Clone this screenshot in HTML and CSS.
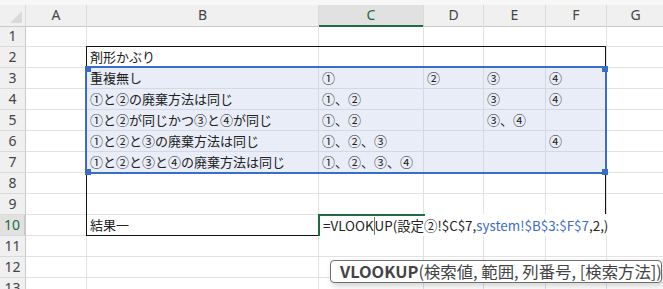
FILE: index.html
```html
<!DOCTYPE html>
<html lang="ja">
<head>
    <meta charset="UTF-8">
    <meta name="viewport" content="width=device-width, initial-scale=1.0">
    <title>system - Excel</title>
    <link rel="stylesheet" href="styles.css">
</head>
<body>
    <div class="strip"></div>
    <div class="sheet">
        <div class="row head">
            <div class="corner"></div>
            <div class="col">A</div>
            <div class="col">B</div>
            <div class="col active">C</div>
            <div class="col">D</div>
            <div class="col">E</div>
            <div class="col">F</div>
            <div class="col">G</div>
        </div>
        <div class="row">
            <div class="num">1</div>
            <div class="cell"></div><div class="cell"></div><div class="cell"></div><div class="cell"></div><div class="cell"></div><div class="cell"></div><div class="cell"></div>
        </div>
        <div class="row">
            <div class="num">2</div>
            <div class="cell"></div><div class="cell">剤形かぶり</div><div class="cell"></div><div class="cell"></div><div class="cell"></div><div class="cell"></div><div class="cell"></div>
        </div>
        <div class="row">
            <div class="num">3</div>
            <div class="cell"></div><div class="cell ref">重複無し</div><div class="cell ref">①</div><div class="cell ref">②</div><div class="cell ref">③</div><div class="cell ref">④</div><div class="cell"></div>
        </div>
        <div class="row">
            <div class="num">4</div>
            <div class="cell"></div><div class="cell ref">①と②の廃棄方法は同じ</div><div class="cell ref">①、②</div><div class="cell ref"></div><div class="cell ref">③</div><div class="cell ref">④</div><div class="cell"></div>
        </div>
        <div class="row">
            <div class="num">5</div>
            <div class="cell"></div><div class="cell ref">①と②が同じかつ③と④が同じ</div><div class="cell ref">①、②</div><div class="cell ref"></div><div class="cell ref">③、④</div><div class="cell ref"></div><div class="cell"></div>
        </div>
        <div class="row">
            <div class="num">6</div>
            <div class="cell"></div><div class="cell ref">①と②と③の廃棄方法は同じ</div><div class="cell ref">①、②、③</div><div class="cell ref"></div><div class="cell ref"></div><div class="cell ref">④</div><div class="cell"></div>
        </div>
        <div class="row">
            <div class="num">7</div>
            <div class="cell"></div><div class="cell ref">①と②と③と④の廃棄方法は同じ</div><div class="cell ref">①、②、③、④</div><div class="cell ref"></div><div class="cell ref"></div><div class="cell ref"></div><div class="cell"></div>
        </div>
        <div class="row">
            <div class="num">8</div>
            <div class="cell"></div><div class="cell"></div><div class="cell"></div><div class="cell"></div><div class="cell"></div><div class="cell"></div><div class="cell"></div>
        </div>
        <div class="row">
            <div class="num">9</div>
            <div class="cell"></div><div class="cell"></div><div class="cell"></div><div class="cell"></div><div class="cell"></div><div class="cell"></div><div class="cell"></div>
        </div>
        <div class="row">
            <div class="num active">10</div>
            <div class="cell"></div><div class="cell">結果一</div><div class="cell"></div><div class="cell"></div><div class="cell"></div><div class="cell"></div><div class="cell"></div>
        </div>
        <div class="row">
            <div class="num">11</div>
            <div class="cell"></div><div class="cell"></div><div class="cell"></div><div class="cell"></div><div class="cell"></div><div class="cell"></div><div class="cell"></div>
        </div>
        <div class="row">
            <div class="num">12</div>
            <div class="cell"></div><div class="cell"></div><div class="cell"></div><div class="cell"></div><div class="cell"></div><div class="cell"></div><div class="cell"></div>
        </div>
        <div class="row">
            <div class="num">13</div>
            <div class="cell"></div><div class="cell"></div><div class="cell"></div><div class="cell"></div><div class="cell"></div><div class="cell"></div><div class="cell"></div>
        </div>

        <!-- Rahmen B2:F9 und B10 -->
        <div class="frame frame-table"></div>
        <div class="frame frame-result"></div>

        <!-- Bezug system!$B$3:$F$7 -->
        <div class="refbox">
            <span class="handle tl"></span>
            <span class="handle tr"></span>
            <span class="handle bl"></span>
            <span class="handle br"></span>
        </div>

        <div class="editbox">=VLOOK<span class="caret"></span>UP(設定②!$C$7,<span class="ref-text">system!$B$3:$F$7</span>,2,)</div>

        <div class="tip"><b>VLOOKUP</b>(検索値, 範囲, 列番号, [検索方法])</div>
    </div>
</body>
</html>
```

FILE: styles.css
```css
html, body {
    margin: 0;
    background: #fff;
    overflow: hidden;
}

.strip {
    height: 5px;
    background: #f7f7f7;
}

.sheet {
    position: relative;
    font-family: "Noto Sans CJK JP", "Noto Sans", sans-serif;
    font-size: 13px;
    color: #222;
}

.row {
    display: grid;
    grid-template-columns: 26px 61px 232px 105px 60px 62px 61px 58px;
    height: 21px;
}

.row > div {
    box-sizing: border-box;
    border-right: 1px solid #e1e1e1;
    border-bottom: 1px solid #e1e1e1;
    white-space: nowrap;
    line-height: 20px;
}

.head > div {
    background: #f0f0f0;
    border-right-color: #dadada;
    border-bottom-color: #c8c8c8;
    font-family: "Noto Sans", sans-serif;
    font-size: 14px;
    color: #444;
    text-align: center;
}

.corner {
    position: relative;
}

.corner::after {
    content: "";
    position: absolute;
    right: 3px;
    bottom: 3px;
    border-left: 12px solid transparent;
    border-bottom: 12px solid #d9d9d9;
}

.head .active {
    background: #e1e1e1;
    border-bottom: 2px solid #1e6b41;
    color: #1e6b41;
}

.num {
    background: #f0f0f0;
    border-right-color: #c8c8c8 !important;
    border-bottom-color: #dadada !important;
    font-family: "Noto Sans", sans-serif;
    font-size: 14px;
    color: #444;
    text-align: center;
}

.num.active {
    background: #e1e1e1;
    border-right: 2px solid #1e6b41;
    color: #1e6b41;
}

.cell {
    padding-left: 3px;
}

.cell.ref {
    background: #e9edf7;
    border-color: #d3d8e4;
}

.frame {
    position: absolute;
    box-sizing: border-box;
    border: 0 solid #111;
}

.frame-table {
    left: 86px;
    top: 41px;
    width: 520px;
    height: 168px;
    border-width: 1px 1px 0 1px;
}

.frame-result {
    left: 86px;
    top: 209px;
    width: 233px;
    height: 22px;
    border-width: 0 0 1px 1px;
}

.refbox {
    position: absolute;
    left: 85px;
    top: 61px;
    width: 522px;
    height: 108px;
    box-sizing: border-box;
    border: 2px solid #3a6cc8;
}

.handle {
    position: absolute;
    width: 6px;
    height: 6px;
    background: #3a6cc8;
}

.handle.tl { left: -2px; top: -2px; }
.handle.tr { right: -3px; top: -2px; }
.handle.bl { left: -2px; bottom: -3px; }
.handle.br { right: -3px; bottom: -3px; }

.editbox {
    position: absolute;
    left: 318px;
    top: 209px;
    right: 0;
    height: 22px;
    box-sizing: border-box;
    padding-left: 3px;
    background: #fff;
    border-left: 2px solid #1e6b41;
    font-size: 13.4px;
    line-height: 22px;
    white-space: nowrap;
}

.editbox::before {
    content: "";
    position: absolute;
    left: -2px;
    top: 0;
    width: 107px;
    height: 2px;
    background: #1e6b41;
}

.caret {
    display: inline-block;
    width: 0;
    height: 18px;
    border-left: 1px solid #777;
    vertical-align: -4px;
}

.ref-text {
    color: #3a6cc8;
}

.tip {
    position: absolute;
    left: 330px;
    top: 255px;
    width: 332px;
    height: 23px;
    box-sizing: border-box;
    padding-left: 9px;
    background: #fff;
    border: 1px solid #6e6e6e;
    border-radius: 4px;
    box-shadow: 2px 3px 6px rgba(0, 0, 0, 0.18);
    font-size: 16.4px;
    line-height: 21px;
    color: #444;
    white-space: nowrap;
}

.tip b {
    font-weight: 700;
}
```
